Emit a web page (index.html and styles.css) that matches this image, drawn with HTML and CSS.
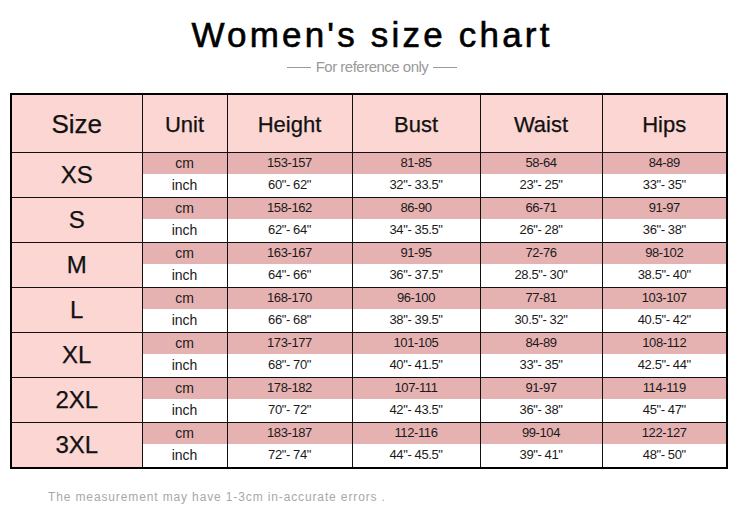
FILE: index.html
```html
<!DOCTYPE html>
<html>
<head>
<meta charset="utf-8">
<link rel="stylesheet" href="styles.css">
</head>
<body>
<div class="page">
  <h1 class="title">Women's size chart</h1>
  <div class="subtitle"><span class="dash"></span><span>For reference only</span><span class="dash"></span></div>
  <table class="chart">
    <colgroup>
      <col class="c-size"><col class="c-unit"><col class="c-h"><col class="c-b"><col class="c-w"><col class="c-hp">
    </colgroup>
    <thead>
      <tr class="head">
        <th class="size-head">Size</th><th>Unit</th><th>Height</th><th>Bust</th><th>Waist</th><th>Hips</th>
      </tr>
    </thead>
    <tbody>
      <tr class="cm"><td class="size" rowspan="2">XS</td><td class="unit">cm</td><td>153-157</td><td>81-85</td><td>58-64</td><td>84-89</td></tr>
      <tr class="inch"><td class="unit">inch</td><td>60"- 62"</td><td>32"- 33.5"</td><td>23"- 25"</td><td>33"- 35"</td></tr>
      <tr class="cm"><td class="size" rowspan="2">S</td><td class="unit">cm</td><td>158-162</td><td>86-90</td><td>66-71</td><td>91-97</td></tr>
      <tr class="inch"><td class="unit">inch</td><td>62"- 64"</td><td>34"- 35.5"</td><td>26"- 28"</td><td>36"- 38"</td></tr>
      <tr class="cm"><td class="size" rowspan="2">M</td><td class="unit">cm</td><td>163-167</td><td>91-95</td><td>72-76</td><td>98-102</td></tr>
      <tr class="inch"><td class="unit">inch</td><td>64"- 66"</td><td>36"- 37.5"</td><td>28.5"- 30"</td><td>38.5"- 40"</td></tr>
      <tr class="cm"><td class="size" rowspan="2">L</td><td class="unit">cm</td><td>168-170</td><td>96-100</td><td>77-81</td><td>103-107</td></tr>
      <tr class="inch"><td class="unit">inch</td><td>66"- 68"</td><td>38"- 39.5"</td><td>30.5"- 32"</td><td>40.5"- 42"</td></tr>
      <tr class="cm"><td class="size" rowspan="2">XL</td><td class="unit">cm</td><td>173-177</td><td>101-105</td><td>84-89</td><td>108-112</td></tr>
      <tr class="inch"><td class="unit">inch</td><td>68"- 70"</td><td>40"- 41.5"</td><td>33"- 35"</td><td>42.5"- 44"</td></tr>
      <tr class="cm"><td class="size" rowspan="2">2XL</td><td class="unit">cm</td><td>178-182</td><td>107-111</td><td>91-97</td><td>114-119</td></tr>
      <tr class="inch"><td class="unit">inch</td><td>70"- 72"</td><td>42"- 43.5"</td><td>36"- 38"</td><td>45"- 47"</td></tr>
      <tr class="cm"><td class="size" rowspan="2">3XL</td><td class="unit">cm</td><td>183-187</td><td>112-116</td><td>99-104</td><td>122-127</td></tr>
      <tr class="inch"><td class="unit">inch</td><td>72"- 74"</td><td>44"- 45.5"</td><td>39"- 41"</td><td>48"- 50"</td></tr>
    </tbody>
  </table>
  <p class="note">The measurement may have 1-3cm in-accurate errors .</p>
</div>
</body>
</html>
```

FILE: styles.css
```css
html, body {
  margin: 0;
  padding: 0;
  background: #fff;
}
.page {
  width: 744px;
  font-family: "Liberation Sans", Arial, sans-serif;
  color: #000;
}
.title {
  margin: 0;
  padding-top: 14px;
  font-size: 35px;
  line-height: 42px;
  font-weight: normal;
  letter-spacing: 3.2px;
  text-align: center;
  color: #000;
  -webkit-text-stroke: 0.6px #000;
}
.subtitle {
  margin-top: 1px;
  height: 20px;
  display: flex;
  justify-content: center;
  align-items: center;
  gap: 5px;
  font-size: 15px;
  line-height: 20px;
  letter-spacing: -0.5px;
  color: #9a9a9a;
}
.dash {
  display: block;
  width: 24px;
  height: 1px;
  background: #9a9a9a;
  margin-top: 1px;
}
.chart {
  margin: 16px 0 0 10px;
  border-collapse: collapse;
  border: 2px solid #000;
  table-layout: fixed;
  width: 717px;
}
.c-size { width: 131px; }
.c-unit { width: 85px; }
.c-h { width: 125px; }
.c-b { width: 128px; }
.c-w { width: 122px; }
.c-hp { width: 125px; }
.chart th, .chart td {
  border: 1px solid #111;
  padding: 0;
  text-align: center;
  vertical-align: middle;
}
.head th {
  height: 58px;
  padding-top: 3px;
  box-sizing: border-box;
  background: #fbd6d3;
  font-weight: normal;
  font-size: 22px;
  color: #111;
  -webkit-text-stroke: 0.25px #111;
}
.head th.size-head {
  font-size: 26px;
}
.chart td {
  font-size: 13px;
  letter-spacing: -0.4px;
  color: #1a1a1a;
}
.chart td.unit {
  font-size: 14px;
  letter-spacing: 0;
}
.chart td.size {
  background: #fbd6d3;
  font-size: 24px;
  letter-spacing: 0;
  color: #111;
  -webkit-text-stroke: 0.25px #111;
}
.cm td {
  height: 21px;
  background: #e6b1b1;
  border-bottom: hidden;
  line-height: 16px;
}
.cm td.size {
  border-bottom: 1px solid #111;
}
.inch td {
  height: 23px;
  background: #fff;
  line-height: 16px;
}
.note {
  margin: 20px 0 0 48px;
  font-size: 12px;
  line-height: 16px;
  letter-spacing: 0.87px;
  color: #a8a8a8;
}
```
